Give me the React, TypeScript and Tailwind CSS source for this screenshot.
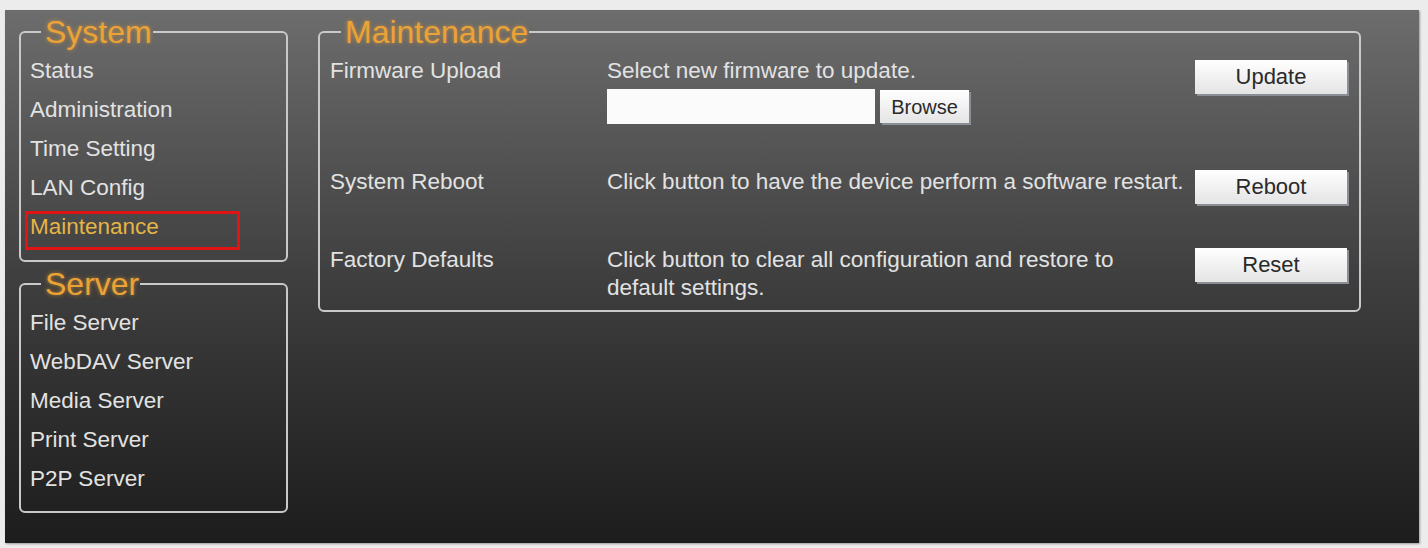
import React from "react";

const systemLinks = ["Status", "Administration", "Time Setting", "LAN Config", "Maintenance"];
const serverLinks = ["File Server", "WebDAV Server", "Media Server", "Print Server", "P2P Server"];

const legendCls =
  "ml-[11px] pl-[4px] pr-[1px] text-[32px] leading-[34px] text-[#eba236] [text-shadow:0_0_4px_rgba(255,170,40,0.6)]";

const Btn = ({ label, className = "" }: { label: string; className?: string }) => (
  <button
    className={
      "h-[34px] w-[152px] bg-gradient-to-b from-[#ffffff] to-[#e4e4e4] text-[22px] leading-[34px] text-[#2a2a2a] shadow-[2px_2px_0_#8a8f96] " +
      className
    }
  >
    {label}
  </button>
);

const NavBox = ({
  title,
  links,
  active,
  className = "",
}: {
  title: string;
  links: string[];
  active?: string;
  className?: string;
}) => (
  <fieldset className={"rounded-md border-2 border-[#c9c9c9] pl-[9px] " + className}>
    <legend className={legendCls}>{title}</legend>
    <ul className="pt-[2px]">
      {links.map((l) => (
        <li key={l} className="relative h-[39px] text-[22.5px] leading-[39px] text-[#e2e2e2]">
          {l === active ? (
            <>
              <span className="text-[#e6b444]">{l}</span>
              <div className="absolute left-[-5px] top-[4px] h-[39px] w-[215px] border-[3px] border-[#e01414]"></div>
            </>
          ) : (
            l
          )}
        </li>
      ))}
    </ul>
  </fieldset>
);

export default function App() {
  return (
    <div className="h-[548px] w-[1428px] bg-[#ececec] pt-[10px] pl-[5px] pr-[9px] pb-[5px] font-['Liberation_Sans',Arial,sans-serif]">
      <div className="flex h-[533px] bg-gradient-to-b from-[#6d6d6d] via-[#3f3f3f] to-[#1d1d1d] pt-[5px] pl-[14px] shadow-[1px_1px_2px_#999]">
        <div className="flex w-[269px] flex-col gap-[5px]">
          <NavBox title="System" links={systemLinks} active="Maintenance" className="pb-[14px]" />
          <NavBox title="Server" links={serverLinks} className="pb-[13px]" />
        </div>

        <fieldset className="ml-[30px] h-[297px] w-[1043px] rounded-md border-2 border-[#c9c9c9] pl-[10px] text-[22.5px] leading-[28px] text-[#e2e2e2]">
          <legend className={legendCls}>Maintenance</legend>

          <div className="mt-[8px] flex">
            <div className="w-[277px]">Firmware Upload</div>
            <div className="w-[588px]">
              <div>Select new firmware to update.</div>
              <div className="mt-[4px] flex items-center gap-[5px]">
                <div className="h-[35px] w-[268px] bg-[#fbfbfb]"></div>
                <button className="h-[33px] w-[89px] bg-gradient-to-b from-[#ffffff] to-[#e4e4e4] text-[20px] text-[#2a2a2a] shadow-[2px_2px_0_#8a8f96]">
                  Browse
                </button>
              </div>
            </div>
            <Btn label="Update" className="mt-[3px]" />
          </div>

          <div className="mt-[44px] flex">
            <div className="w-[277px]">System Reboot</div>
            <div className="w-[588px] whitespace-nowrap">Click button to have the device perform a software restart.</div>
            <Btn label="Reboot" className="mt-[2px]" />
          </div>

          <div className="mt-[42px] flex">
            <div className="w-[277px]">Factory Defaults</div>
            <div className="w-[588px]">
              Click button to clear all configuration and restore to
              <br />
              default settings.
            </div>
            <Btn label="Reset" className="mt-[2px]" />
          </div>
        </fieldset>
      </div>
    </div>
  );
}
